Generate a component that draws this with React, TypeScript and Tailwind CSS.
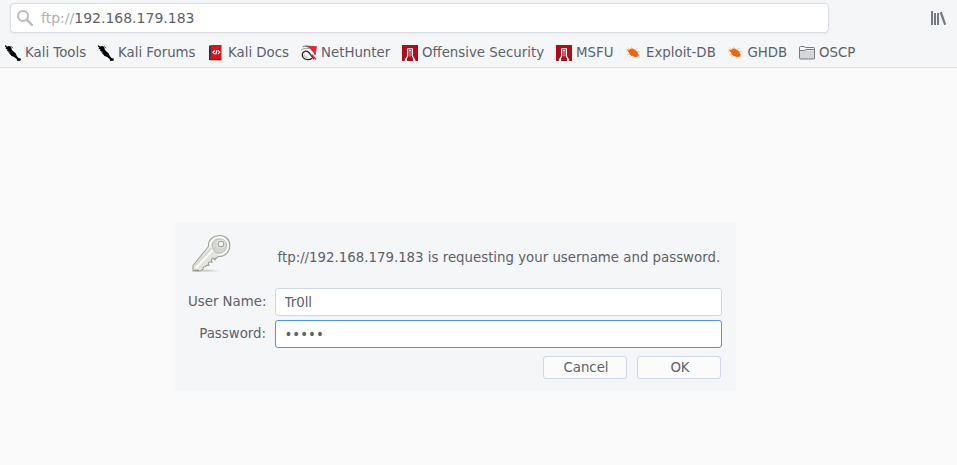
import React from 'react';

const Dragon = () => (
  <svg width="16" height="16" viewBox="0 0 16 16">
    <path d="M0 0l2 1.500 2-.5 1.500.5L6.500 3l.2 1.600L8.500 6.500l2.300 2 1 2.500 1.700 2 2.500.8-.5 1.900-3.200.3-.6-2-2.600-2-2.800-1.200L5 8.500 4 6.300 1.500 5.500l1.200-.8L.3 3.500l1.200-.5L0 1.500z" fill="#000" />
    <path d="M3 6l2 3 3 1.500M6 1.200l2 2" stroke="#000" strokeWidth=".7" fill="none" />
  </svg>
);

const Docs = () => (
  <svg width="16" height="16" viewBox="0 0 16 16">
    <path d="M1 .5h2V15H1z" fill="#17386e" />
    <path d="M2.700 0H13.500v14H2.700z" fill="#dc1218" />
    <path d="M2 14h11.500v1.300H2z" fill="#97121a" />
    <path d="M6.700 5.500L4.900 7.300l1.800 1.700M9 5L7.700 9.500M10 5.500l1.800 1.700L10 9" fill="none" stroke="#fff" strokeWidth="1.100" />
  </svg>
);

const NetHunter = () => (
  <svg width="16" height="16" viewBox="0 0 16 16">
    <path d="M4 .5L16 1.300l-1.500 9L12 8 9 3.500z" fill="#ed2635" />
    <path d="M1.500 1.700C5 .4 7.800 1.400 9.500 3.500c3 1 4.300 3.200 4.700 6.500" fill="none" stroke="#55585d" strokeWidth=".8" />
    <path d="M.3 4.800c3-1.800 6-2 9-.8" fill="none" stroke="#85878b" strokeWidth=".8" />
    <path d="M3 5.500c3-2 7.500-1.200 9.800 2.500l-1.500 3.700L6 8z" fill="#fafafa" />
    <path d="M4 6.300C1 7 .6 10.300 2.200 12.600c2 2.400 6.300 2.600 8.800.6" fill="none" stroke="#222" strokeWidth="1.300" />
    <path d="M4 6.300c3-.8 4.500 1.500 9 7.800" fill="none" stroke="#25272b" strokeWidth="1.400" />
    <path d="M3 8.500c-.5 2 1 3.700 3.800 4.100" fill="none" stroke="#c2c4c8" strokeWidth="1.200" />
    <path d="M10.800 9.800l4.200 4.700" stroke="#ed2635" strokeWidth="1.500" />
  </svg>
);

const Offensive = () => (
  <svg width="16" height="16" viewBox="0 0 16 16">
    <path d="M0 0h16v16H0z" fill="#ae0d1e" />
    <path d="M5 3h1.300v8L5 13.500V16H3.500v-2L5 11zM9.700 3H11v8l1.500 3v2H11v-2.500L9.700 11z" fill="#fff" />
    <path d="M5 3h6v1H5z" fill="#e6b0b5" />
    <path d="M8 4.500v7" stroke="#efc4c8" strokeWidth=".9" />
    <circle cx="8" cy="5.400" r=".8" fill="#fff" />
    <path d="M3.700 13.500L3 16M12.300 13.500L13 16" stroke="#fff" />
  </svg>
);

const Bug = () => (
  <svg className="-ml-px" width="16" height="16" viewBox="0 0 16 16">
    <path d="M2.500 6l-1.500.2M4 4L2.800 2.500M7 3.500L6.500 1.800M10 4.500l2.500-1M12 7l2.800-.5M5 9l-3 .6M7 10l-2 2M13 11l1.600.8" fill="none" stroke="#f4b68f" strokeWidth=".8" />
    <path d="M1.500 4.200L4.300 5l.6-1.300 2.800-.2 2.500 1.400 1.900 1.600.8 2 1 1.600-1.400 1.700-2.600.2-2.900-1L4.800 9.500 3.600 7.100z" fill="#ef640e" />
  </svg>
);

const Folder = () => (
  <svg width="16" height="16" viewBox="0 0 16 16">
    <path d="M.5 13V2.500q0-1 1-1H5l1.300 1h8.200q1 0 1 1V13q0 1-1 1h-13q-1 0-1-1z" fill="#d5d6da" stroke="#777981" />
    <path d="M1 2h3.800L6 3h9v2.500H1z" fill="#f3f4f6" />
    <path d="M1 5.500h4.500L7 4.500h8" fill="none" stroke="#777981" />
  </svg>
);

const Key = () => (
  <svg width="48" height="48" viewBox="0 0 48 48">
    <defs>
      <linearGradient id="metal" x1="0" y1="0" x2="1" y2="1">
        <stop stopColor="#f6f7f3" />
        <stop offset=".55" stopColor="#e3e4df" />
        <stop offset="1" stopColor="#eeefec" />
      </linearGradient>
      <radialGradient id="shadow">
        <stop stopColor="#a6a9a5" stopOpacity=".7" />
        <stop offset="1" stopColor="#c7cac7" stopOpacity="0" />
      </radialGradient>
    </defs>
    <ellipse cx="18" cy="40.700" rx="16" ry="1.800" fill="url(#shadow)" />
    <path d="M20.500 16.500C20 9.500 25.500 5.500 31.500 5.500c6.200 0 10.300 4 10.300 10 0 6.500-4.800 11.500-11.600 11l-2.400 2.200-.8-.5.2 1.800-2.200-2-1.700 1.300.8 3.200-2.500-.8-1.200 1.200.6 2.500-2.400-.3-1.300 1.700-2 .2-.4 2.300-2.300 1.700H5v-5.500z" fill="url(#metal)" stroke="#a0a398" strokeWidth="1.100" strokeLinejoin="round" />
    <path d="M22 17.500c-.7-5.800 4-10.300 9.400-10.300 5.300 0 8.700 3.400 8.700 8.200 0 5.500-4.100 9.500-9.700 9.400" fill="none" stroke="#fff" strokeWidth="1.300" />
    <path d="M24 15c1-4 4-6 7.400-6 4.400 0 7 2.600 7 6.300 0 4.500-3.400 7.800-7.700 7.800-2.700 0-4-1-5-2.600z" fill="#d2d4cf" stroke="#b0b3ab" strokeWidth=".8" />
    <path d="M25 14l8 8M26.500 11.500l9 9M29 10l8.500 8.500" stroke="#e2e4de" strokeWidth=".7" />
    <path d="M23.500 18L7 35.500" stroke="#c9cbc3" strokeWidth="1" />
    <path d="M25 20L8 38" stroke="#fff" strokeWidth="1.200" />
    <circle cx="33" cy="14" r="4" fill="none" stroke="#eef0eb" strokeWidth=".9" />
    <circle cx="33" cy="14" r="2.800" fill="#f4f5f3" stroke="#9fa29b" strokeWidth="1.100" />
    <path d="M6 40.300h5" stroke="#7c8078" />
  </svg>
);

const bookmarks = [
  { label: 'Kali Tools', icon: <Dragon />, width: 'w-[93px]' },
  { label: 'Kali Forums', icon: <Dragon />, width: 'w-[110px]' },
  { label: 'Kali Docs', icon: <Docs />, width: 'w-[93px]' },
  { label: 'NetHunter', icon: <NetHunter />, width: 'w-[101px]' },
  { label: 'Offensive Security', icon: <Offensive />, width: 'w-[154px]' },
  { label: 'MSFU', icon: <Offensive />, width: 'w-[70px]' },
  { label: 'Exploit-DB', icon: <Bug />, width: 'w-[101.5px]' },
  { label: 'GHDB', icon: <Bug />, width: 'w-[71.5px]' },
  { label: 'OSCP', icon: <Folder />, width: 'w-[70px]' },
];

export default function App() {
  return (
    <div className="flex h-[465px] w-[957px] flex-col overflow-hidden bg-[#f9f9fa] font-['DejaVu_Sans',sans-serif] text-[13.333px] leading-4 text-[#5c616c]">
      <header className="h-[68px] shrink-0 border-b border-[#dcdfe3] bg-[#f5f6f8]">
        <div className="flex h-9 items-start justify-between pt-[3px] pr-[11px] pl-[10px]">
          <div className="flex h-[30px] w-[819px] items-center rounded-[4px] border border-[#d9dce2] bg-white pl-[6px] shadow-[0_1px_3px_rgba(0,0,0,0.05)]">
            <svg width="16" height="16" viewBox="0 0 16 16" fill="none" stroke="#b9bbc0" strokeWidth="2">
              <circle cx="6" cy="6" r="5" />
              <path d="M9.700 9.700L15 15" strokeWidth="2.400" strokeLinecap="round" />
            </svg>
            <span className="ml-2 text-[14px] whitespace-pre"><span className="text-[#aeb0b5]">ftp://</span>192.168.179.183</span>
          </div>
          <svg className="mt-[7px]" width="16" height="16" viewBox="0 0 16 16" fill="#747883">
            <path d="M1 1h2v14H1zM4 3h2v12H4zM7 3h2v12H7z" />
            <path d="M9.600 2.500l2.200-.7L16.200 14.300l-2.100.8z" />
          </svg>
        </div>
        <nav className="flex items-start pt-[9px] pl-[5px]">
          {bookmarks.map((b) => (
            <div key={b.label} className={`flex shrink-0 items-start gap-1 whitespace-nowrap ${b.width}`}>
              <span className="size-4 shrink-0">{b.icon}</span>
              <span>{b.label}</span>
            </div>
          ))}
        </nav>
      </header>
      <main className="pt-[155px] pl-[175px]">
        <form className="h-[168px] w-[561px] bg-[#f5f6f7] pr-[14px] pl-[13px]">
          <div className="flex h-[65px]">
            <div className="pt-[7px]"><Key /></div>
            <p className="ml-[41.5px] pt-[27px] whitespace-nowrap">ftp://192.168.179.183 is requesting your username and password.</p>
          </div>
          <div className="grid grid-cols-[78px_447px] items-center gap-x-[9px] gap-y-1">
            <label htmlFor="user" className="text-right whitespace-nowrap">User Name:</label>
            <input id="user" defaultValue="Tr0ll" className="h-7 rounded-[3px] border border-[#cfd6e6] bg-white px-[8.500px] outline-none" />
            <label htmlFor="password" className="text-right whitespace-nowrap">Password:</label>
            <input id="password" type="password" defaultValue="admin" className="h-7 rounded-[3px] border border-[#5294e2] bg-white px-[8.500px] outline-none" />
          </div>
          <div className="mt-2 flex justify-end gap-[10px] pr-px">
            <button type="button" className="h-[23px] w-[84px] rounded-[3px] border border-[#cfd6e6] bg-[#fbfbfc] pl-0.5">Cancel</button>
            <button type="button" className="h-[23px] w-[84px] rounded-[3px] border border-[#cfd6e6] bg-[#fbfbfc] pl-0.5">OK</button>
          </div>
        </form>
      </main>
    </div>
  );
}
